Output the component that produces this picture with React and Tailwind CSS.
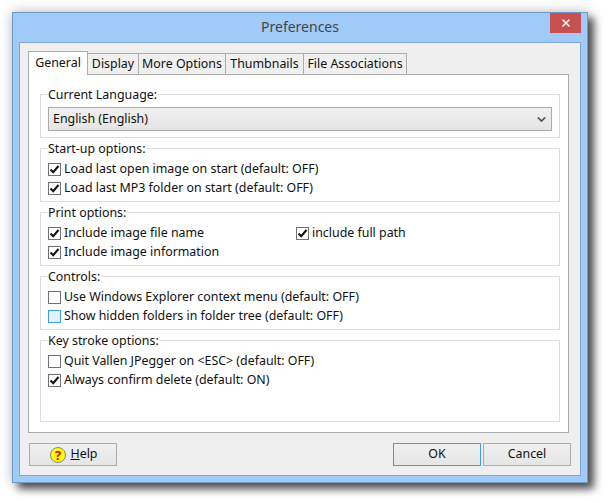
import { ChevronDown, X } from 'lucide-react';

const Check = ({ checked, hot, label }) => (
    <div className="flex h-[19px] items-center">
        <span className={`flex h-[13px] w-[13px] shrink-0 items-center justify-center border ${hot ? 'border-[#3c9df0] bg-[#e5f1fb]' : 'border-[#707070] bg-white'}`}>
            {checked ? (
                <svg width="11" height="11" viewBox="0 0 11 11">
                    <path d="M1.5 5.5 L4.2 8.2 L9.5 2" fill="none" stroke="#111" strokeWidth="2" />
                </svg>
            ) : null}
        </span>
        <span className="ml-[3px] whitespace-nowrap">{label}</span>
    </div>
);

const Group = ({ title, height, children }) => (
    <fieldset className={`border border-[#dcdcdc] px-[7px] pt-[4px] ${height}`}>
        <legend className="bg-white pr-px text-[12.4px] leading-[15px]">{title}</legend>
        {children}
    </fieldset>
);

const Tab = ({ label, width }) => (
    <div className={`-ml-px flex h-[21px] items-center justify-center whitespace-nowrap border border-b-0 border-[#acacac] bg-[#efefef] pt-px ${width}`}>
        {label}
    </div>
);

const DialogButton = ({ children, focused, width }) => (
    <button className={`flex h-[23px] items-center justify-center border bg-gradient-to-b from-[#f0f0f0] to-[#e5e5e5] ${focused ? 'border-[#3c9df0]' : 'border-[#acacac]'} ${width}`}>
        {children}
    </button>
);

export default function App() {
    return (
        <div className="h-[503px] w-[608px] bg-white pl-[12px] pt-[12px] font-['Noto_Sans',sans-serif] text-[12.4px] text-[#111]">
            <div className="flex h-[471px] w-[576px] flex-col border border-[#6f9bc8] bg-[#a0cbf8] px-[6px] pb-[6px] shadow-[0_0_12px_rgba(0,0,0,0.25),6px_6px_8px_rgba(0,0,0,0.65)]">
                <div className="flex h-[29px] shrink-0 items-start">
                    <div className="flex-1 pt-[4px] pl-[31px] text-center text-[14px] leading-[20px] text-[#444]">Preferences</div>
                    <div className="flex h-[20px] w-[31px] items-center justify-center bg-[#c75050] text-white">
                        <X size={12} strokeWidth={3} />
                    </div>
                </div>
                <div className="flex flex-1 flex-col border border-[#7fa5d0] bg-[#efefef] pl-[8px] pr-[9px] pt-[8px]">
                    <div className="flex h-[23px] items-end pl-px">
                        <div className="relative z-10 -mb-px -ml-px flex h-[24px] w-[60px] items-center justify-center border border-b-0 border-[#acacac] bg-white">
                            General
                        </div>
                        <Tab label="Display" width="w-[52px]" />
                        <Tab label="More Options" width="w-[88px]" />
                        <Tab label="Thumbnails" width="w-[79px]" />
                        <Tab label="File Associations" width="w-[104px]" />
                    </div>
                    <div className="flex h-[359px] w-[541px] flex-col border border-[#acacac] bg-white pl-[11px] pr-[8px] pt-[12px]">
                        <Group title="Current Language:" height="h-[51px] mb-[3px]">
                            <div className="mt-px flex h-[24px] items-center justify-between border border-[#acacac] bg-gradient-to-b from-[#f0f0f0] to-[#e5e5e5] pl-[4px] pr-[3px]">
                                <span>English (English)</span>
                                <ChevronDown size={13} strokeWidth={3} className="text-[#555]" />
                            </div>
                        </Group>
                        <Group title="Start-up options:" height="h-[61px] mb-[3px]">
                            <Check checked label="Load last open image on start (default: OFF)" />
                            <Check checked label="Load last MP3 folder on start (default: OFF)" />
                        </Group>
                        <Group title="Print options:" height="h-[61px] mb-[3px]">
                            <div className="grid grid-cols-[248px_1fr]">
                                <Check checked label="Include image file name" />
                                <Check checked label="include full path" />
                                <Check checked label="Include image information" />
                            </div>
                        </Group>
                        <Group title="Controls:" height="h-[61px] mb-[3px]">
                            <Check label="Use Windows Explorer context menu (default: OFF)" />
                            <Check hot label="Show hidden folders in folder tree (default: OFF)" />
                        </Group>
                        <Group title="Key stroke options:" height="h-[89px]">
                            <Check label="Quit Vallen JPegger on <ESC> (default: OFF)" />
                            <Check checked label="Always confirm delete (default: ON)" />
                        </Group>
                    </div>
                    <div className="mt-[10px] flex pl-px">
                        <DialogButton width="w-[88px]">
                            <svg width="18" height="18" viewBox="0 0 18 18" className="mr-[4px]">
                                <circle cx="9" cy="9" r="7.5" fill="#ffff00" stroke="#888" />
                                <text x="9" y="14" textAnchor="middle" fontSize="13" fontWeight="700" fill="#e00000">?</text>
                            </svg>
                            <span><span className="underline">H</span>elp</span>
                        </DialogButton>
                        <div className="flex-1" />
                        <DialogButton focused width="w-[88px] mr-[2px]">OK</DialogButton>
                        <DialogButton width="w-[88px]">Cancel</DialogButton>
                    </div>
                </div>
            </div>
        </div>
    );
}
